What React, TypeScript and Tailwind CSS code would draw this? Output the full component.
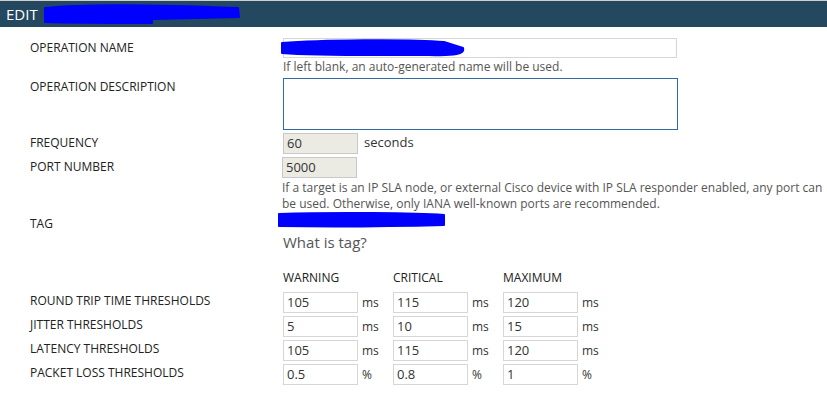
import React from "react";

const font = { fontFamily: '"Open Sans", "DejaVu Sans", sans-serif' };

function Scribble({ className, w, h, d }: { className: string; w: number; h: number; d: string }) {
  return (
    <svg className={`absolute pointer-events-none ${className}`} width={w} height={h} viewBox={`0 0 ${w} ${h}`}>
      <path d={d} fill="#0000ff" stroke="#0000ff" strokeWidth="2" strokeLinejoin="round" />
    </svg>
  );
}

function Field({ value, disabled }: { value: string; disabled?: boolean }) {
  return (
    <div
      className={`w-[75px] h-[21px] border px-[3px] text-[13px] leading-[19px] text-[#333] ${
        disabled ? "bg-[#ebebe4] border-[#c8c8c8]" : "bg-white border-[#d6d6d6]"
      }`}
    >
      {value}
    </div>
  );
}

const thresholds = [
  { label: "ROUND TRIP TIME THRESHOLDS", values: ["105", "115", "120"], unit: "ms" },
  { label: "JITTER THRESHOLDS", values: ["5", "10", "15"], unit: "ms" },
  { label: "LATENCY THRESHOLDS", values: ["105", "115", "120"], unit: "ms" },
  { label: "PACKET LOSS THRESHOLDS", values: ["0.5", "0.8", "1"], unit: "%" },
];

export default function App() {
  return (
    <div className="relative w-[827px] h-[395px] bg-white overflow-hidden text-[#222]" style={font}>
      <div className="h-px bg-[#cfcfcf]" />
      <div className="h-[26px] bg-[#23485f] flex items-center pl-[6px] text-white text-[15px]">
        EDIT
      </div>

      <div className="pl-[30px] pt-[11px] text-[12px]">
        <div className="flex">
          <div className="w-[253px] leading-[19px]">OPERATION NAME</div>
          <div>
            <div className="w-[394px] h-[20px] border border-[#d6d6d6]" />
            <div className="text-[#555] leading-[18px]">If left blank, an auto-generated name will be used.</div>
          </div>
        </div>

        <div className="flex mt-[2px]">
          <div className="w-[253px] leading-[18px]">OPERATION DESCRIPTION</div>
          <div className="w-[395px] h-[52px] border border-[#2f6ca3]" />
        </div>

        <div className="flex mt-[3px]">
          <div className="w-[253px] leading-[19px]">FREQUENCY</div>
          <div className="flex">
            <Field value="60" disabled />
            <span className="pl-[6px] text-[#333] leading-[18px] text-[13px]">seconds</span>
          </div>
        </div>

        <div className="flex mt-[3px]">
          <div className="w-[253px] leading-[19px]">PORT NUMBER</div>
          <div>
            <Field value="5000" disabled />
            <div className="text-[#555] leading-[16px] pt-[2px] w-[545px]">
              If a target is an IP SLA node, or external Cisco device with IP SLA responder enabled, any port can be used. Otherwise, only IANA well-known ports are recommended.
            </div>
          </div>
        </div>

        <div className="flex mt-[2px]">
          <div className="w-[253px] leading-[20px]">TAG</div>
          <div>
            <div className="h-[18px]" />
            <div className="text-[#555] text-[15px] leading-[20px]">What is tag?</div>
          </div>
        </div>

        <div className="flex mt-[18px]">
          <div className="w-[253px]" />
          {["WARNING", "CRITICAL", "MAXIMUM"].map((h) => (
            <div key={h} className="w-[110px] leading-[16px]">{h}</div>
          ))}
        </div>

        <div className="flex flex-col gap-[3px] mt-[6px]">
          {thresholds.map((r) => (
            <div key={r.label} className="flex items-start">
              <div className="w-[253px] leading-[17px]">{r.label}</div>
              {r.values.map((v, i) => (
                <div key={i} className="flex items-center w-[110px]">
                  <Field value={v} />
                  <span className="pl-[4px] text-[12px] text-[#333]">{r.unit}</span>
                </div>
              ))}
            </div>
          ))}
        </div>
      </div>

      <Scribble
        className="left-[42px] top-[2px]"
        w={200}
        h={24}
        d="M3 6 C40 2 120 3 196 6 L197 15 C150 16 120 17 110 17 L110 21 C70 21 30 21 3 20 Z"
      />
      <Scribble
        className="left-[279px] top-[39px]"
        w={188}
        h={20}
        d="M3 4 C40 1 130 0 165 3 L184 9 C186 15 176 17 150 16 C100 16 40 17 3 14 Z"
      />
      <Scribble
        className="left-[276px] top-[211px]"
        w={172}
        h={18}
        d="M3 3 C60 1 140 2 168 4 L168 14 C130 15 60 16 3 15 Z"
      />
    </div>
  );
}
